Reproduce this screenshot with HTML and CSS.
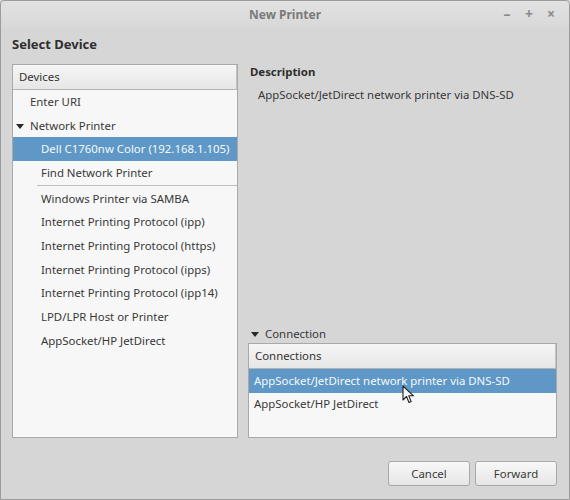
FILE: index.html
```html
<!DOCTYPE html>
<html>
<head>
<meta charset="utf-8">
<link rel="stylesheet" href="styles.css">
</head>
<body>
<div class="window">
  <div class="titlebar">
    <span class="title">New Printer</span>
    <div class="controls"><span class="ctl">&#8211;</span><span class="ctl">+</span><span class="ctl">&#215;</span></div>
  </div>
  <div class="content">
    <h1 class="heading">Select Device</h1>
    <div class="main">
      <div class="tree devices">
        <div class="tree-header">Devices</div>
        <div class="row lvl0">Enter URI</div>
        <div class="row lvl0 expander"><span class="tri"></span>Network Printer</div>
        <div class="row lvl1 selected">Dell C1760nw Color (192.168.1.105)</div>
        <div class="row lvl1">Find Network Printer</div>
        <div class="sep"></div>
        <div class="row lvl1">Windows Printer via SAMBA</div>
        <div class="row lvl1">Internet Printing Protocol (ipp)</div>
        <div class="row lvl1">Internet Printing Protocol (https)</div>
        <div class="row lvl1">Internet Printing Protocol (ipps)</div>
        <div class="row lvl1">Internet Printing Protocol (ipp14)</div>
        <div class="row lvl1">LPD/LPR Host or Printer</div>
        <div class="row lvl1">AppSocket/HP JetDirect</div>
      </div>
      <div class="right">
        <div class="desc">
          <div class="desc-title">Description</div>
          <div class="desc-text">AppSocket/JetDirect network printer via DNS-SD</div>
        </div>
        <div class="conn">
          <div class="conn-label"><span class="tri"></span>Connection</div>
          <div class="tree connections">
            <div class="tree-header">Connections</div>
            <div class="row crow selected">AppSocket/JetDirect network printer via DNS-SD</div>
            <div class="row crow">AppSocket/HP JetDirect</div>
            <svg class="cursor" width="14" height="20" viewBox="0 0 14 20"><path d="M1 1 L1 15 L4.5 11.5 L7 17.5 L9.2 16.6 L6.8 10.8 L11.5 10.8 Z" fill="#f4f4f4" stroke="#222" stroke-width="1.1" stroke-linejoin="round"/></svg>
          </div>
        </div>
      </div>
    </div>
    <div class="footer">
      <button class="btn">Cancel</button>
      <button class="btn">Forward</button>
    </div>
  </div>
</div>
</body>
</html>
```
FILE: styles.css
```css
html, body { margin: 0; padding: 0; }
body {
  width: 570px; height: 500px; overflow: hidden;
  background: #d6d6d6;
  font-family: "Noto Sans", "Open Sans", sans-serif;
  font-size: 11.4px;
  color: #383838;
}
.window {
  box-sizing: border-box;
  width: 570px; height: 500px;
  border: 1px solid #9c9c9c;
  border-radius: 4px 4px 0 0;
  background: #d6d6d6;
  display: flex; flex-direction: column;
}
.titlebar {
  height: 27px;
  position: relative;
  display: flex; align-items: center; justify-content: center;
  background: linear-gradient(#e2e2e2, #d8d8d8);
  border-radius: 4px 4px 0 0;
  flex: none;
}
.title { font-weight: bold; color: #7a7a7a; font-size: 12px; }
.controls {
  position: absolute; right: 12px; top: 3px;
  display: flex; gap: 10px; color: #8a8a8a; font-size: 14px; font-weight: bold;
}
.ctl { width: 12px; text-align: center; }
.content {
  flex: 1;
  padding: 7px 12px 11px 11px;
  display: flex; flex-direction: column;
}
.heading {
  margin: 0 0 11px 0;
  font-size: 13px; font-weight: bold; color: #2e2e2e;
  line-height: 18px; height: 18px;
}
.main {
  height: 374px;
  flex: none;
  display: grid;
  grid-template-columns: 226px 309px;
  column-gap: 10px;
}
.tree {
  box-sizing: border-box;
  border: 1px solid #a9a9a9;
  background: #f7f7f7;
  position: relative;
}
.tree-header {
  height: 24px;
  line-height: 24px;
  padding-left: 6px;
  background: linear-gradient(#f6f6f6, #e6e6e6);
  border-bottom: 1px solid #b4b4b4;
  border-right: 1px solid #c4c4c4;
  color: #333;
}
.row {
  height: 23.67px;
  line-height: 23.67px;
  white-space: nowrap;
  color: #383838;
}
.lvl0 { padding-left: 17px; }
.lvl1 { padding-left: 28px; }
.expander { position: relative; }
.tri {
  display: inline-block;
  width: 0; height: 0;
  border-left: 4px solid transparent;
  border-right: 4px solid transparent;
  border-top: 5px solid #2a2a2a;
}
.expander .tri { position: absolute; left: 3px; top: 10px; }
.selected { background: #5f98c6; color: #f4f8fb; }
.sep { height: 1px; margin-left: 24px; border-top: 1px solid #bdbdbd; }
.right {
  display: flex; flex-direction: column; justify-content: space-between;
}
.desc { padding-left: 2px; }
.desc-title { font-weight: bold; color: #2e2e2e; line-height: 17px; margin-top: -1px; }
.desc-text { padding-left: 8px; line-height: 20px; margin-top: 5px; }
.conn { display: flex; flex-direction: column; }
.conn-label { line-height: 16px; padding-left: 3px; display: flex; align-items: center; gap: 6px; margin-bottom: 1px; }
.connections { height: 95px; }
.crow { padding-left: 5px; }
.connections .row { height: 23.5px; line-height: 23.5px; }
.connections .row + .row { line-height: 22px; }
.cursor { position: absolute; left: 153px; top: 41px; }
.footer {
  margin-top: 23px;
  display: flex; justify-content: flex-end; gap: 5px;
}
.btn {
  width: 82px; height: 25px;
  font-family: "Noto Sans", "Open Sans", sans-serif;
  font-size: 11.4px; color: #3a3a3a;
  border: 1px solid #a8a8a8;
  border-radius: 3px;
  background: linear-gradient(#f8f8f8, #e6e6e6);
  padding: 0;
}
```
